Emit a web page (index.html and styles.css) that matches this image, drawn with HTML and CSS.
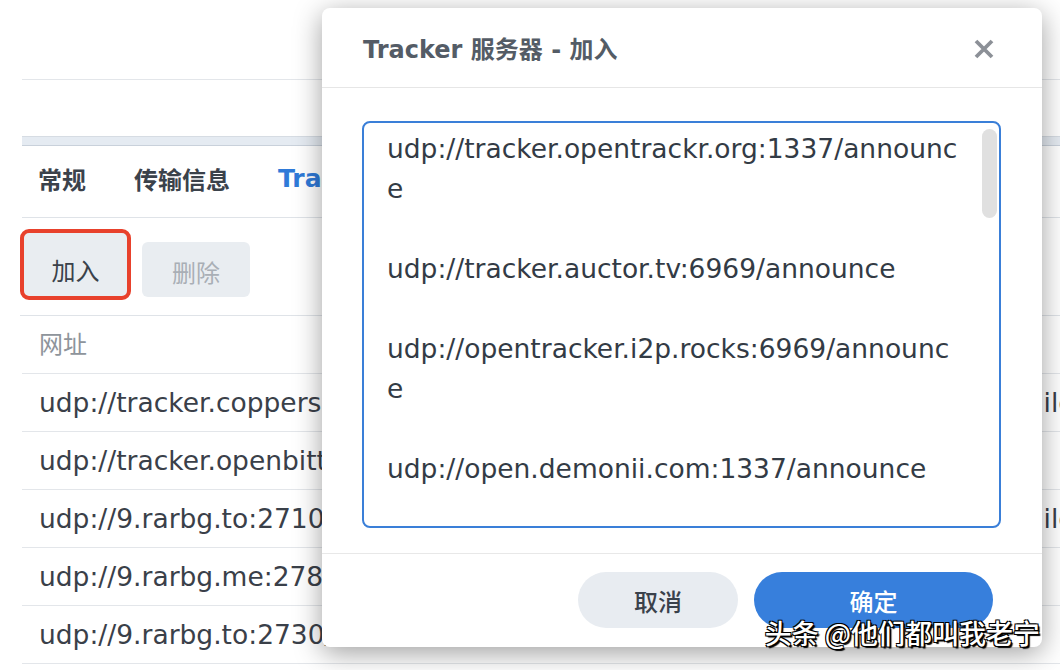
FILE: index.html
```html
<!DOCTYPE html>
<html lang="zh-CN">
<head>
<meta charset="utf-8">
<title>Tracker 服务器 - 加入</title>
<link rel="stylesheet" href="styles.css">
</head>
<body>
<div class="page">
  <div class="topbar"></div>
  <div class="gap"></div>
  <div class="band"></div>
  <div class="tabs">
    <span class="tab">常规</span>
    <span class="tab">传输信息</span>
    <span class="tab active">Trackers</span>
  </div>
  <div class="toolbar">
    <div class="mark"><button class="btn add">加入</button></div>
    <button class="btn del">删除</button>
  </div>
  <div class="table">
    <div class="row head"><span class="cell url">网址</span><span class="cell st"></span></div>
    <div class="row"><span class="cell url">udp://tracker.coppersurfer.tk:6969/announce</span><span class="cell st">failed</span></div>
    <div class="row"><span class="cell url">udp://tracker.openbittorrent.com:80/announce</span><span class="cell st"></span></div>
    <div class="row"><span class="cell url">udp://9.rarbg.to:2710/announce</span><span class="cell st">failed</span></div>
    <div class="row"><span class="cell url">udp://9.rarbg.me:2780/announce</span><span class="cell st"></span></div>
    <div class="row"><span class="cell url">udp://9.rarbg.to:2730/announce</span><span class="cell st"></span></div>
  </div>
</div>

<div class="dialog">
  <div class="dlg-head">
    <span class="dlg-title">Tracker 服务器 - 加入</span>
    <svg class="close" width="20" height="20" viewBox="0 0 20 20"><path d="M2 2 L18 18 M18 2 L2 18" stroke="#8c9097" stroke-width="3.8" stroke-linecap="butt" fill="none"/></svg>
  </div>
  <div class="dlg-body">
    <div class="editor">
      <div class="lines">
        <div class="ln">udp://tracker.opentrackr.org:1337/announce</div>
        <div class="ln">&nbsp;</div>
        <div class="ln">udp://tracker.auctor.tv:6969/announce</div>
        <div class="ln">&nbsp;</div>
        <div class="ln">udp://opentracker.i2p.rocks:6969/announce</div>
        <div class="ln">&nbsp;</div>
        <div class="ln">udp://open.demonii.com:1337/announce</div>
        <div class="ln">&nbsp;</div>
        <div class="ln">udp://tracker.openbittorrent.com:6969/announce</div>
      </div>
      <div class="scroll"></div>
    </div>
  </div>
  <div class="dlg-foot">
    <button class="pill cancel">取消</button>
    <button class="pill ok">确定</button>
  </div>
</div>

<div class="watermark">头条 @他们都叫我老宁</div>
</body>
</html>
```

FILE: styles.css
```css
html, body {
  margin: 0;
  padding: 0;
}
body {
  width: 1060px;
  height: 670px;
  overflow: hidden;
  position: relative;
  background: #ffffff;
  font-family: "DejaVu Sans", "Noto Sans CJK SC", sans-serif;
  color: #3a4049;
}
.page {
  padding-left: 22px;
}
.topbar {
  height: 79px;
  border-bottom: 1px solid #e3e6ea;
}
.gap {
  height: 56px;
}
.band {
  height: 8px;
  background: #e5ebf2;
  border-top: 1px solid #d6dce3;
  border-bottom: 1px solid #c9d1db;
}
.tabs {
  height: 71px;
  box-sizing: content-box;
  display: flex;
  align-items: center;
  gap: 48px;
  padding-left: 16px;
  padding-bottom: 0;
  border-bottom: 1px solid #dfe3e8;
  white-space: nowrap;
}
.tab {
  font-size: 24px;
  font-weight: bold;
  color: #3b424b;
  margin-top: -6px;
}
.tab.active {
  color: #2f7ad8;
  font-size: 25px;
}
.toolbar {
  height: 98px;
  display: flex;
  align-items: flex-end;
  padding-bottom: 18px;
  box-sizing: border-box;
  border-bottom: 1px solid #dfe3e8;
  margin-left: -2px;
}
.btn {
  font-family: "Noto Sans CJK SC", sans-serif;
  font-size: 24px;
  border: none;
  background: #e9edf1;
  border-radius: 6px;
  padding: 0;
}
.mark {
  width: 111px;
  height: 71px;
  box-sizing: border-box;
  border: 4px solid #e8412c;
  border-radius: 9px;
  background: #e9edf1;
  margin-bottom: -3px;
  padding-top: 10px;
  display: flex;
}
.btn.add {
  flex: 1;
  color: #3a414a;
  background: transparent;
}
.btn.del {
  width: 108px;
  height: 55px;
  margin-left: 11px;
  padding-top: 3px;
  color: #a9afb6;
}
.row {
  display: grid;
  grid-template-columns: 996px 1fr;
  height: 57px;
  align-items: center;
  border-bottom: 1px solid #e3e6ea;
  font-size: 26.5px;
  white-space: nowrap;
  overflow: hidden;
}
.cell.url {
  padding-left: 17px;
  overflow: hidden;
}
.row.head {
  font-family: "Noto Sans CJK SC", sans-serif;
  font-size: 24px;
  color: #8e949b;
}
.row.head .cell {
  padding-bottom: 4px;
}
.dialog {
  position: absolute;
  left: 322px;
  top: 8px;
  width: 720px;
  height: 639px;
  background: #ffffff;
  border-radius: 8px;
  box-shadow: 0 6px 28px rgba(0, 0, 0, 0.38);
  display: flex;
  flex-direction: column;
  overflow: hidden;
}
.dlg-head {
  height: 79px;
  flex: none;
  border-bottom: 1px solid #e6e6e6;
  display: flex;
  align-items: center;
  justify-content: space-between;
  padding: 0 48px 0 41px;
}
.dlg-title {
  font-size: 24px;
  font-weight: bold;
  color: #545c66;
  white-space: nowrap;
}
.close {
  display: block;
  margin-top: 2px;
}
.dlg-body {
  padding: 33px 41px 25px 40px;
  flex: none;
}
.editor {
  position: relative;
  height: 407px;
  box-sizing: border-box;
  border: 2px solid #3a7fd8;
  border-radius: 8px;
  padding: 6px 36px 0 23px;
  overflow: hidden;
}
.lines {
  font-size: 26.5px;
  line-height: 40px;
  color: #333b45;
  overflow-wrap: anywhere;
  word-break: break-all;
}
.scroll {
  position: absolute;
  right: 2px;
  top: 6px;
  width: 15px;
  height: 89px;
  border-radius: 8px;
  background: #e0e0e0;
}
.dlg-foot {
  flex: 1;
  border-top: 1px solid #e8e8e8;
  display: flex;
  justify-content: flex-end;
  align-items: flex-start;
  gap: 16px;
  padding: 18px 49px 0 0;
}
.pill {
  height: 56px;
  border: none;
  border-radius: 28px;
  font-family: "Noto Sans CJK SC", sans-serif;
  font-size: 24px;
  font-weight: 500;
  padding: 0;
}
.pill.cancel {
  width: 160px;
  background: #e8ecf1;
  color: #3a414b;
}
.pill.ok {
  width: 239px;
  background: #377fdc;
  color: #ffffff;
}
.watermark {
  position: absolute;
  right: 20px;
  bottom: 18px;
  font-family: "Noto Sans CJK SC", sans-serif;
  font-size: 27px;
  font-weight: 500;
  color: #ffffff;
  white-space: nowrap;
  text-shadow: 1px 1px 0 #000, -1px -1px 0 #000, 1px -1px 0 #000, -1px 1px 0 #000, 2px 2px 1px #000;
}
```
